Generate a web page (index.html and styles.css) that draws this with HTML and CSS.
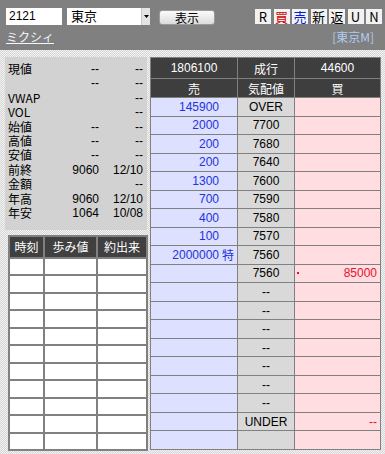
FILE: index.html
```html
<!DOCTYPE html>
<html lang="ja">
<head>
<meta charset="utf-8">
<title>板</title>
<link rel="stylesheet" href="styles.css">
</head>
<body>
<div class="page">
  <header class="top">
    <div class="row1">
      <div class="code">2121</div>
      <div class="select"><span class="sel-text">東京</span><span class="arrow"><svg width="5" height="3" viewBox="0 0 5 3"><path d="M0 0h5L2.5 3z" fill="#000"/></svg></span></div>
      <div class="btn">表示</div>
      <div class="tools">
        <span class="tb">R</span><span class="tb buy">買</span><span class="tb sell">売</span><span class="tb">新</span><span class="tb">返</span><span class="tb">U</span><span class="tb">N</span>
      </div>
    </div>
    <div class="row2">
      <a class="name" href="#">ミクシィ</a>
      <span class="mkt">[東京M]</span>
    </div>
  </header>

  <main class="content">
    <div class="left">
      <div class="quote">
        <span class="lbl">現値</span><span class="v">--</span><span class="v">--</span>
        <span class="lbl"></span><span class="v">--</span><span class="v">--</span>
        <span class="lbl">VWAP</span><span class="v"></span><span class="v">--</span>
        <span class="lbl">VOL</span><span class="v"></span><span class="v">--</span>
        <span class="lbl">始値</span><span class="v">--</span><span class="v">--</span>
        <span class="lbl">高値</span><span class="v">--</span><span class="v">--</span>
        <span class="lbl">安値</span><span class="v">--</span><span class="v">--</span>
        <span class="lbl">前終</span><span class="v">9060</span><span class="v">12/10</span>
        <span class="lbl">金額</span><span class="v"></span><span class="v">--</span>
        <span class="lbl">年高</span><span class="v">9060</span><span class="v">12/10</span>
        <span class="lbl">年安</span><span class="v">1064</span><span class="v">10/08</span>
      </div>
      <div class="ticks">
        <div class="th">時刻</div><div class="th">歩み値</div><div class="th">約出来</div>
        <div></div><div></div><div></div>
        <div></div><div></div><div></div>
        <div></div><div></div><div></div>
        <div></div><div></div><div></div>
        <div></div><div></div><div></div>
        <div></div><div></div><div></div>
        <div></div><div></div><div></div>
        <div></div><div></div><div></div>
        <div></div><div></div><div></div>
        <div></div><div></div><div></div>
        <div></div><div></div><div></div>
      </div>
    </div>

    <div class="board">
      <div class="h">1806100</div><div class="h">成行</div><div class="h">44600</div>
      <div class="h">売</div><div class="h">気配値</div><div class="h">買</div>

      <div class="s">145900<i></i></div><div class="p">OVER</div><div class="b"></div>
      <div class="s">2000<i></i></div><div class="p">7700</div><div class="b"></div>
      <div class="s">200<i></i></div><div class="p">7680</div><div class="b"></div>
      <div class="s">200<i></i></div><div class="p">7640</div><div class="b"></div>
      <div class="s">1300<i></i></div><div class="p">7600</div><div class="b"></div>
      <div class="s">700<i></i></div><div class="p">7590</div><div class="b"></div>
      <div class="s">400<i></i></div><div class="p">7580</div><div class="b"></div>
      <div class="s">100<i></i></div><div class="p">7570</div><div class="b"></div>
      <div class="s">2000000<i>特</i></div><div class="p">7560</div><div class="b"></div>
      <div class="s"></div><div class="p">7560</div><div class="b"><span class="dot"></span>85000</div>
      <div class="s"></div><div class="p">--</div><div class="b"></div>
      <div class="s"></div><div class="p">--</div><div class="b"></div>
      <div class="s"></div><div class="p">--</div><div class="b"></div>
      <div class="s"></div><div class="p">--</div><div class="b"></div>
      <div class="s"></div><div class="p">--</div><div class="b"></div>
      <div class="s"></div><div class="p">--</div><div class="b"></div>
      <div class="s"></div><div class="p">--</div><div class="b"></div>
      <div class="s"></div><div class="p">UNDER</div><div class="b">--</div>
      <div class="s"></div><div class="p"></div><div class="b"></div>
    </div>
  </main>
</div>
</body>
</html>
```

FILE: styles.css
```css
* { box-sizing: border-box; }

html, body {
  margin: 0;
  padding: 0;
}

body {
  width: 385px;
  height: 454px;
  overflow: hidden;
  font-family: "Liberation Sans", "Noto Sans CJK JP", sans-serif;
  font-size: 12px;
  color: #000;
  background-color: #e6e6e6;
  background-image: repeating-conic-gradient(#d6d6d6 0 25%, #f2f2f2 0 50%);
  background-size: 2px 2px;
}

.page {
  display: flex;
  flex-direction: column;
}

/* ---------- header ---------- */
.top {
  height: 50px;
  background: #808080;
  padding: 8px 3px 0 6px;
  display: flex;
  flex-direction: column;
}

.row1 {
  display: flex;
  align-items: flex-start;
  height: 18px;
}

.code {
  width: 56px;
  height: 17px;
  background: #fff;
  padding-left: 3px;
  font-size: 12px;
  line-height: 17px;
}

.select {
  margin-left: 5px;
  width: 83px;
  height: 17px;
  background: #fff;
  display: flex;
  justify-content: space-between;
}

.sel-text {
  padding-left: 4px;
  font-family: "Noto Sans CJK JP", sans-serif;
  font-size: 13px;
  line-height: 16px;
}

.arrow {
  width: 9px;
  height: 17px;
  background: #e4e4e4;
  border-left: 1px solid #c8c8c8;
  display: flex;
  align-items: center;
  justify-content: center;
}

.btn {
  margin-left: 9px;
  margin-top: 2px;
  width: 56px;
  height: 15px;
  border-radius: 3px;
  background: linear-gradient(#fafafa, #dcdcdc);
  border: 1px solid #9a9a9a;
  text-align: center;
  font-family: "Noto Sans CJK JP", sans-serif;
  font-size: 12px;
  line-height: 13px;
}

.tools {
  margin-left: auto;
  margin-top: 1px;
  display: flex;
  gap: 2.5px;
}

.tb {
  width: 16px;
  height: 15px;
  background: #f2f2f2;
  text-align: center;
  font-family: "Noto Sans CJK JP", sans-serif;
  font-size: 13px;
  line-height: 15px;
}

.tb.buy { color: #d00000; }
.tb.sell { color: #0020d0; }

.row2 {
  margin-top: 4px;
  display: flex;
  justify-content: space-between;
  align-items: center;
  padding-right: 8px;
}

.name {
  color: #f4f6ff;
  font-family: "Noto Sans CJK JP", sans-serif;
  font-size: 12px;
  line-height: 14px;
  text-decoration: underline;
}

.mkt {
  color: #b0ccf0;
  font-family: "Noto Sans CJK JP", sans-serif;
  font-size: 12px;
  line-height: 14px;
}

/* ---------- content ---------- */
.content {
  display: flex;
  padding-top: 7px;
}

.left {
  width: 150px;
  display: flex;
  flex-direction: column;
}

.quote {
  margin-left: 5px;
  width: 142px;
  height: 173px;
  background: #d2d2d2;
  padding: 5px 4px 0 3px;
  display: grid;
  grid-template-columns: 40px 51px 44px;
  grid-auto-rows: 14.4px;
  line-height: 14.4px;
}

.lbl {
  font-family: "Noto Sans CJK JP", sans-serif;
  font-size: 12px;
  white-space: nowrap;
}

.v {
  text-align: right;
}

.ticks {
  margin-top: 5px;
  margin-left: 8px;
  width: 140px;
  height: 216px;
  background: #808080;
  padding: 2px;
  display: grid;
  gap: 2px;
  grid-template-columns: 33px 51px 48px;
  grid-template-rows: 20px repeat(11, 1fr);
}

.ticks > div {
  background: #fff;
}

.ticks > .th {
  background: #404040;
  color: #fff;
  text-align: center;
  font-family: "Noto Sans CJK JP", sans-serif;
  font-size: 12px;
  line-height: 20px;
}

/* ---------- board ---------- */
.board {
  width: 231px;
  height: 393px;
  background: #808080;
  padding: 1px;
  display: grid;
  gap: 1px;
  grid-template-columns: 86px 56px 85px;
  grid-template-rows: 20px 18px repeat(19, 1fr);
}

.board > div {
  display: flex;
  align-items: center;
  white-space: nowrap;
}

.board .h {
  background: #3e3e3e;
  color: #fff;
  justify-content: center;
  font-family: "Liberation Sans", "Noto Sans CJK JP", sans-serif;
}

.board .s {
  background: #dde0ff;
  color: #2233dd;
  justify-content: flex-end;
}

.board .s i {
  font-style: normal;
  width: 18px;
  padding-left: 3px;
  font-family: "Noto Sans CJK JP", sans-serif;
}

.board .p {
  background: #d9d9d9;
  justify-content: center;
}

.board .b {
  background: #ffdde0;
  color: #e8102a;
  justify-content: flex-end;
  padding-right: 3px;
  position: relative;
}

.dot {
  position: absolute;
  left: 2px;
  top: 50%;
  width: 2px;
  height: 2px;
  margin-top: -1px;
  background: #e8102a;
}
```
